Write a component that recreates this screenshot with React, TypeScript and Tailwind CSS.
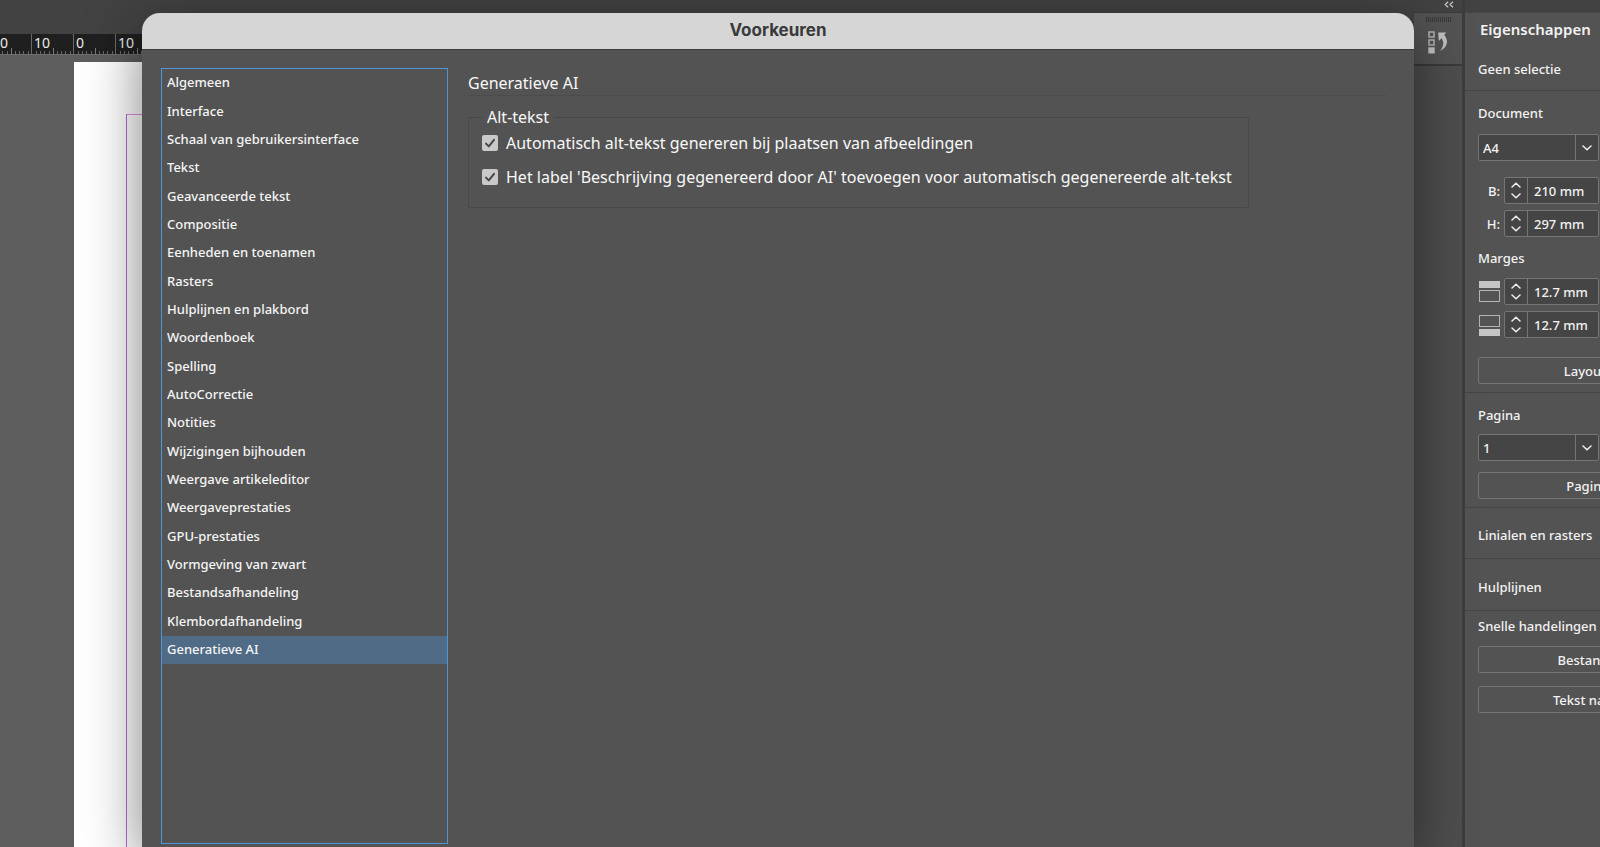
import { useState, type ReactNode } from "react";

const CATEGORIES = [
  "Algemeen",
  "Interface",
  "Schaal van gebruikersinterface",
  "Tekst",
  "Geavanceerde tekst",
  "Compositie",
  "Eenheden en toenamen",
  "Rasters",
  "Hulplijnen en plakbord",
  "Woordenboek",
  "Spelling",
  "AutoCorrectie",
  "Notities",
  "Wijzigingen bijhouden",
  "Weergave artikeleditor",
  "Weergaveprestaties",
  "GPU-prestaties",
  "Vormgeving van zwart",
  "Bestandsafhandeling",
  "Klembordafhandeling",
  "Generatieve AI",
];

const RULER_LABELS = ["20", "10", "0", "10"];
const MINOR_TICKS = [4, 8, 12, 17, 25, 29, 33, 38];

function RulerCell({ label }: { label: string }) {
  return (
    <div className="relative h-full w-[42px] shrink-0 border-l border-[#6a6a6a] pl-[2px] text-sm leading-[17px] text-[#ececec]">
      {label}
      <svg className="absolute bottom-0 left-0 h-[6px] w-[42px]" viewBox="0 0 42 6" shapeRendering="crispEdges">
        {MINOR_TICKS.map((x) => (
          <rect key={x} x={x} y="3" width="1" height="3" fill="#6a6a6a" />
        ))}
        <rect x="21" y="0" width="1" height="6" fill="#7a7a7a" />
      </svg>
    </div>
  );
}

function Workspace() {
  return (
    <div className="flex min-w-0 flex-1 flex-col bg-[#5e5e5e]">
      <div className="h-[34px] shrink-0 bg-[#424242]" />
      <div className="flex h-[21px] shrink-0 overflow-hidden border-b border-[#6e6e6e] bg-[#1f1f1f]">
        <div className="-ml-[11px] flex">
          {RULER_LABELS.map((label, i) => (
            <RulerCell key={i} label={label} />
          ))}
        </div>
      </div>
      <div className="flex min-h-0 flex-1 pt-[7px] pl-[74px]">
        <div className="flex flex-1 bg-white pt-[52px] pl-[52px]">
          <div className="flex-1 border-t border-l border-t-[#e58ae8] border-l-[#b569d6]" />
        </div>
      </div>
    </div>
  );
}

function HistoryIcon() {
  return (
    <svg className="h-[23px] w-[20px]" viewBox="0 0 20 23" fill="none">
      <rect x="1" y="1" width="5" height="5" stroke="#bdbdbd" strokeWidth="1.4" />
      <rect x="1" y="9" width="5" height="5" stroke="#bdbdbd" strokeWidth="1.4" />
      <rect x="0.3" y="16.3" width="6.4" height="6.2" fill="#c4c4c4" />
      <path d="M10.2 1.4H18.2L16.2 4C20.6 9.2 20 15.6 12 20 15.8 15.4 16.2 11 13.6 7.2L10.8 10Z" fill="#c2c2c2" />
    </svg>
  );
}

function Dock() {
  return (
    <div className="flex w-[48px] shrink-0 flex-col bg-[#4e4e4e]">
      <div className="flex h-[12px] shrink-0 items-center justify-end bg-[#424242] pr-[8px] pb-[3px]">
        <svg className="h-[7px] w-[10px]" viewBox="0 0 10 7" fill="none" stroke="#c8c8c8" strokeWidth="1.2">
          <path d="M4.2.8 1.2 3.5 4.2 6.2M9 .8 6 3.5 9 6.2" />
        </svg>
      </div>
      <div className="flex h-[54px] shrink-0 flex-col items-center gap-[9px] border-t border-b-2 border-t-[#3c3c3c] border-b-[#3a3a3a] bg-[#535353] pt-[4px]">
        <svg className="h-[5px] w-[25px]" viewBox="0 0 25 5" shapeRendering="crispEdges">
          {[0, 2, 4, 6, 8, 10, 12, 14, 16, 18, 20, 22, 24].map((x) => (
            <rect key={x} x={x} y="0" width="1" height="5" fill="#383838" />
          ))}
        </svg>
        <HistoryIcon />
      </div>
    </div>
  );
}

function Chevron({ up = false }: { up?: boolean }) {
  return (
    <svg className="h-[6px] w-[10px]" viewBox="0 0 10 6" fill="none" stroke="#f0f0f0" strokeWidth="1.5" strokeLinecap="round">
      <path d={up ? "M1 5 5 1.2 9 5" : "M1 1 5 4.8 9 1"} />
    </svg>
  );
}

function Dropdown({ label, value }: { label: string; value: string }) {
  return (
    <div className="grid h-[27px] w-[121px] grid-cols-[1fr_23px] rounded-xs border border-[#757575] bg-[#454545]">
      <select
        aria-label={label}
        defaultValue={value}
        className="col-span-2 col-start-1 row-start-1 appearance-none bg-transparent pl-1 text-[13px] font-medium text-[#f2f2f2] outline-none"
      >
        <option>{value}</option>
      </select>
      <span className="pointer-events-none col-start-2 row-start-1 flex items-center justify-center border-l border-[#757575]">
        <Chevron />
      </span>
    </div>
  );
}

function Stepper({ id, label, value, children }: { id: string; label: string; value: string; children: ReactNode }) {
  const [text, setText] = useState(value);
  return (
    <div className="flex h-[27px] w-[121px] items-center justify-between">
      <label htmlFor={id} aria-label={label} className="flex w-[22px] justify-end text-[13px]">
        {children}
      </label>
      <div className="flex h-full w-[95px] rounded-xs border border-[#757575] bg-[#454545]">
        <div className="flex w-[23px] shrink-0 flex-col items-center justify-between border-r border-[#757575] py-[4px]">
          <button type="button" aria-label={label + " verhogen"}>
            <Chevron up />
          </button>
          <button type="button" aria-label={label + " verlagen"}>
            <Chevron />
          </button>
        </div>
        <input
          id={id}
          value={text}
          onChange={(e) => setText(e.target.value)}
          className="w-full min-w-0 bg-transparent pl-[6px] text-[13px] font-medium text-[#f2f2f2] outline-none"
        />
      </div>
    </div>
  );
}

function MarginIcon({ bottom = false }: { bottom?: boolean }) {
  return (
    <svg className="h-[22px] w-[22px]" viewBox="0 0 22 22" fill="none">
      <rect x="1" y={bottom ? 15 : 0} width="21" height="7" fill="#c6c6c6" />
      <rect x="1.5" y={bottom ? 1.5 : 9.5} width="20" height="11" stroke="#b4b4b4" />
    </svg>
  );
}

function PanelButton({ children }: { children: ReactNode }) {
  return (
    <button
      type="button"
      className="h-[27px] w-full shrink-0 rounded-xs border border-[#757575] text-center text-[13px] font-medium text-[#f2f2f2]"
    >
      {children}
    </button>
  );
}

function PropertiesPanel() {
  return (
    <aside className="w-[138px] shrink-0 overflow-hidden border-l-3 border-[#3d3d3d] bg-[#535353]">
      <div className="flex w-[310px] flex-col text-[13px] leading-[18px] font-medium text-[#f2f2f2]">
        <div className="h-[12px] bg-[#424242]" />
        <div className="flex h-[79px] flex-col gap-[21px] border-t border-b border-[#454545] px-[13px] pt-[6px]">
          <h2 className="pl-[2px] text-[15px] leading-[20px] font-semibold">Eigenschappen</h2>
          <p>Geen selectie</p>
        </div>
        <section className="flex h-[302px] flex-col border-b border-[#454545] px-[13px] pt-[13px]">
          <h3>Document</h3>
          <div className="mt-[12px] flex flex-col gap-[6px]">
            <Dropdown label="Document" value="A4" />
            <div className="mt-[10px]">
              <Stepper id="width" label="Breedte" value="210 mm">
                B:
              </Stepper>
            </div>
            <Stepper id="height" label="Hoogte" value="297 mm">
              H:
            </Stepper>
          </div>
          <h3 className="mt-[12px]">Marges</h3>
          <div className="mt-[11px] flex flex-col gap-[6px]">
            <Stepper id="margin-top" label="Bovenmarge" value="12.7 mm">
              <MarginIcon />
            </Stepper>
            <Stepper id="margin-bottom" label="Ondermarge" value="12.7 mm">
              <MarginIcon bottom />
            </Stepper>
          </div>
          <div className="mt-[19px]">
            <PanelButton>Layout aanpassen</PanelButton>
          </div>
        </section>
        <section className="flex h-[115px] flex-col border-b border-[#454545] px-[13px] pt-[13px]">
          <h3>Pagina</h3>
          <div className="mt-[10px] flex flex-col gap-[11px]">
            <Dropdown label="Pagina" value="1" />
            <PanelButton>Pagina bewerken</PanelButton>
          </div>
        </section>
        <section className="flex h-[51px] items-center border-b border-[#454545] px-[13px] pt-[4px]">
          <h3>Linialen en rasters</h3>
        </section>
        <section className="flex h-[52px] items-center border-b border-[#454545] px-[13px] pt-[4px]">
          <h3>Hulplijnen</h3>
        </section>
        <section className="flex flex-col px-[13px] pt-[6px]">
          <h3>Snelle handelingen</h3>
          <div className="mt-[11px] flex flex-col gap-[13px]">
            <PanelButton>Bestand importeren</PanelButton>
            <PanelButton>Tekst naar afbeelding</PanelButton>
          </div>
        </section>
      </div>
    </aside>
  );
}

function CheckRow({ children }: { children: ReactNode }) {
  return (
    <label className="flex h-[22px] items-center gap-2">
      <span className="grid size-4 shrink-0">
        <input
          type="checkbox"
          defaultChecked
          className="peer col-start-1 row-start-1 size-4 appearance-none rounded-[2px] bg-[#c9c9c9]"
        />
        <svg
          className="pointer-events-none invisible col-start-1 row-start-1 size-4 peer-checked:visible"
          viewBox="0 0 16 16"
          fill="none"
          stroke="#474747"
          strokeWidth="2"
          strokeLinecap="round"
          strokeLinejoin="round"
        >
          <path d="M4 8.6 6.8 11.4 12 4.8" />
        </svg>
      </span>
      {children}
    </label>
  );
}

function PreferencesDialog() {
  const [selected, setSelected] = useState("Generatieve AI");
  return (
    <div
      role="dialog"
      aria-labelledby="dialog-title"
      className="absolute top-[13px] right-[186px] bottom-0 left-[142px] flex flex-col rounded-t-[18px] bg-[#535353] shadow-[0_16px_56px_rgba(0,0,0,0.5)]"
    >
      <header className="flex h-[37px] shrink-0 items-center justify-center rounded-t-[18px] border-b border-[#3c3c3c] bg-[#d6d6d6] pb-[2px]">
        <h1 id="dialog-title" className="font-['Inter',sans-serif] text-[17px] leading-[24px] font-bold text-[#3a3a3a]">
          Voorkeuren
        </h1>
      </header>
      <div className="flex min-h-0 flex-1 gap-[20px] pt-[18px] pr-[28px] pb-[3px] pl-[19px]">
        <nav className="w-[287px] shrink-0 border border-[#4f94d8]">
          <ul className="grid h-[595px] auto-rows-fr">
            {CATEGORIES.map((name) => (
              <li key={name} className="flex">
                <button
                  type="button"
                  onClick={() => setSelected(name)}
                  className={
                    name === selected
                      ? "flex-1 bg-[#4f6b85] px-[5px] text-left text-[13px] font-medium text-[#f5f5f5]"
                      : "flex-1 px-[5px] text-left text-[13px] font-medium text-[#f5f5f5]"
                  }
                >
                  {name}
                </button>
              </li>
            ))}
          </ul>
        </nav>
        <section className="flex min-w-0 flex-1 flex-col items-start gap-[9px] text-base leading-[24px] text-[#f8f8f8]">
          <h2 className="w-full border-b border-[#4c4c4c] pt-[3px]">Generatieve AI</h2>
          <fieldset className="w-[781px] max-w-full rounded-xs border border-[#484848] px-[13px] pb-[19px]">
            <legend className="px-[5px]">Alt-tekst</legend>
            <div className="flex flex-col gap-[12px] pt-[3px]">
              <CheckRow>Automatisch alt-tekst genereren bij plaatsen van afbeeldingen</CheckRow>
              <CheckRow>Het label 'Beschrijving gegenereerd door AI' toevoegen voor automatisch gegenereerde alt-tekst</CheckRow>
            </div>
          </fieldset>
        </section>
      </div>
    </div>
  );
}

export default function App() {
  return (
    <main className="relative flex h-screen w-full overflow-hidden bg-[#424242] font-['Noto_Sans','Open_Sans',sans-serif]">
      <Workspace />
      <Dock />
      <PropertiesPanel />
      <PreferencesDialog />
    </main>
  );
}
